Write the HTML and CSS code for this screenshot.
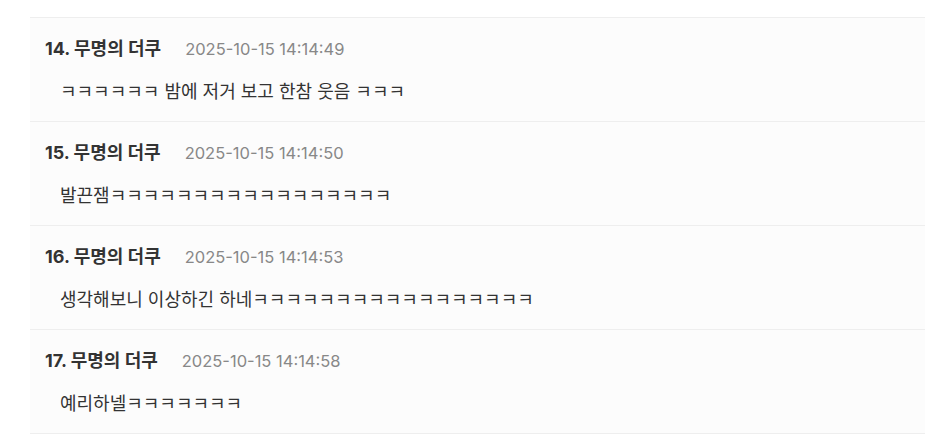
FILE: index.html
```html
<!DOCTYPE html>
<html lang="ko">
<head>
    <meta charset="UTF-8">
    <meta name="viewport" content="width=device-width, initial-scale=1.0">
    <title>댓글</title>
    <link rel="stylesheet" href="styles.css">
</head>
<body>

    <ul class="comment-list">
        <li class="comment">
            <div class="comment-head">
                <span class="comment-name">14. 무명의 더쿠</span>
                <span class="comment-date">2025-10-15 14:14:49</span>
            </div>
            <p class="comment-text">ㅋㅋㅋㅋㅋㅋ 밤에 저거 보고 한참 웃음 ㅋㅋㅋ</p>
        </li>
        <li class="comment">
            <div class="comment-head">
                <span class="comment-name">15. 무명의 더쿠</span>
                <span class="comment-date">2025-10-15 14:14:50</span>
            </div>
            <p class="comment-text">발끈잼ㅋㅋㅋㅋㅋㅋㅋㅋㅋㅋㅋㅋㅋㅋㅋㅋㅋ</p>
        </li>
        <li class="comment">
            <div class="comment-head">
                <span class="comment-name">16. 무명의 더쿠</span>
                <span class="comment-date">2025-10-15 14:14:53</span>
            </div>
            <p class="comment-text">생각해보니 이상하긴 하네ㅋㅋㅋㅋㅋㅋㅋㅋㅋㅋㅋㅋㅋㅋㅋㅋㅋ</p>
        </li>
        <li class="comment">
            <div class="comment-head">
                <span class="comment-name">17. 무명의 더쿠</span>
                <span class="comment-date">2025-10-15 14:14:58</span>
            </div>
            <p class="comment-text">예리하넬ㅋㅋㅋㅋㅋㅋㅋ</p>
        </li>
    </ul>

</body>
</html>
```

FILE: styles.css
```css
* {
    box-sizing: border-box;
    margin: 0;
    padding: 0;
    font-family: "Inter", "Noto Sans CJK KR", sans-serif;
}

body {
    background: #fff;
    color: #333;
    padding-top: 17px;
}

.comment-list {
    list-style: none;
    margin-left: 30px;
    border-bottom: 1px solid #eee;
}

.comment {
    display: flex;
    flex-direction: column;
    gap: 19px;
    height: 104px;
    padding: 19px 15px 0;
    border-top: 1px solid #eee;
    background-color: #fcfcfc;
}

.comment-head {
    display: flex;
    align-items: baseline;
    gap: 24px;
    line-height: 24px;
}

.comment-name {
    font-size: 18px;
    font-weight: 700;
    color: #333;
}

.comment-date {
    font-size: 16.5px;
    color: #888;
}

.comment-text {
    padding-left: 15px;
    font-size: 18px;
    line-height: 24px;
    color: #333;
}
```
